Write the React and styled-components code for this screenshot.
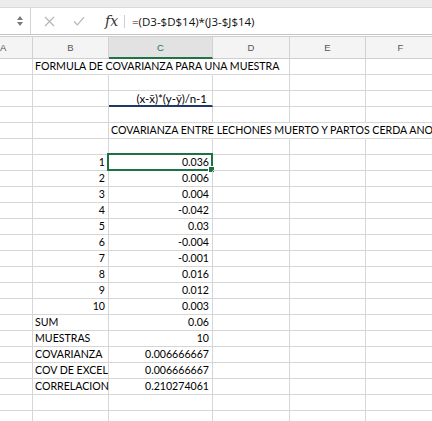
import React from "react";
import styled, { createGlobalStyle, css } from "styled-components";

const GlobalStyle = createGlobalStyle`
  html, body { margin: 0; padding: 0; background: #ffffff; overflow: hidden; }
  body { font-family: Lato, "Liberation Sans", Arial, sans-serif; }
`;

const FONT = `Lato, "Liberation Sans", Arial, sans-serif`;
const GRID = "#d6d6d6";
const COLS = [33, 76, 104, 77, 76, 70];

const Sheet = styled.div`
  width: 432px;
  height: 421px;
  overflow: hidden;
  display: flex;
  flex-direction: column;
  background: #fff;
`;

const TopStrip = styled.div`
  height: 7px;
  background: #ececec;
  flex: none;
`;

const FormulaBar = styled.div`
  height: 26px;
  display: flex;
  align-items: center;
  background: #fff;
  border-top: 1px solid #d9d9d9;
  border-bottom: 1px solid #c4c4c4;
  flex: none;
`;

const NameBox = styled.div`
  width: 31px;
  height: 100%;
  border-right: 1px solid #d4d4d4;
  display: flex;
  align-items: center;
  justify-content: flex-end;
  padding-right: 7px;
  box-sizing: border-box;
`;

const Spinner = styled.div`
  display: flex;
  flex-direction: column;
  gap: 2px;
`;

const Tri = styled.div`
  width: 0;
  height: 0;
  border-left: 3px solid transparent;
  border-right: 3px solid transparent;
  ${(p) =>
    p.$up
      ? css`border-bottom: 4px solid #7a7a7a;`
      : css`border-top: 4px solid #7a7a7a;`}
`;

const IconArea = styled.div`
  display: flex;
  align-items: center;
  width: 93px;
  padding-left: 13px;
  box-sizing: border-box;
`;

const IconSlot = styled.div`
  width: ${(p) => p.$w}px;
  display: flex;
  align-items: center;
  justify-content: flex-start;
`;

const Fx = styled.span`
  font-family: "DejaVu Serif", "Liberation Serif", serif;
  font-style: italic;
  font-size: 14px;
  color: #333;
  margin-left: 3px;
`;

const Divider = styled.div`
  width: 1px;
  height: 13px;
  background: #cfcfcf;
  margin-right: 7px;
`;

const FormulaText = styled.div`
  font-family: "Open Sans", "Liberation Sans", sans-serif;
  font-size: 11.5px;
  color: #111;
  white-space: nowrap;
`;

const Gap = styled.div`
  height: 1px;
  background: #fff;
  flex: none;
`;

const HeaderRow = styled.div`
  display: grid;
  grid-template-columns: ${COLS.map((c) => c + "px").join(" ")};
  height: 23px;
  border-top: 1px solid #cfcfcf;
  background: #f4f4f4;
  flex: none;
  box-sizing: border-box;
`;

const HeaderCell = styled.div`
  display: flex;
  align-items: center;
  justify-content: ${(p) => (p.$left ? "flex-start" : "center")};
  font-family: "Liberation Sans", Arial, sans-serif;
  font-size: 9.5px;
  color: ${(p) => (p.$sel ? "#217346" : "#555")};
  border-right: 1px solid #d2d2d2;
  border-bottom: ${(p) => (p.$sel ? "2px solid #217346" : "1px solid #cfcfcf")};
  background: ${(p) => (p.$sel ? "#e2e2e2" : "transparent")};
  box-sizing: border-box;
  padding-top: ${(p) => (p.$sel ? "1px" : "0")};
`;

const Body = styled.div`
  display: flex;
  flex-direction: column;
`;

const Row = styled.div`
  display: grid;
  grid-template-columns: ${COLS.map((c) => c + "px").join(" ")};
  height: 16px;
`;

const Cell = styled.div`
  position: relative;
  box-sizing: border-box;
  height: 16px;
  border-bottom: ${(p) => (p.$under ? "2px solid #1f3864" : `1px solid ${GRID}`)};
  border-right: ${(p) => (p.$noRight ? "1px solid transparent" : `1px solid ${GRID}`)};
  font-family: ${FONT};
  font-size: ${(p) => (p.$big ? "11.5px" : "10.6px")};
  line-height: 15px;
  color: #000;
  white-space: nowrap;
  overflow: visible;
  text-align: ${(p) => (p.$align === "right" ? "right" : "left")};
  padding: 0 ${(p) => (p.$big ? "5px" : "3px")} 0 2px;
  z-index: ${(p) => (p.$front ? 2 : 1)};
`;

const Selection = styled.div`
  position: absolute;
  left: -2px;
  top: -2px;
  right: -1px;
  bottom: -1px;
  border: 2px solid #1e7145;
  pointer-events: none;
`;

const FillHandle = styled.div`
  position: absolute;
  right: -4px;
  bottom: -4px;
  width: 5px;
  height: 5px;
  background: #1e7145;
  border: 1px solid #fff;
`;

function XIcon() {
  return (
    <svg width="11" height="11" viewBox="0 0 11 11">
      <path d="M1 1 L10 10 M10 1 L1 10" stroke="#b5b5b5" strokeWidth="1.2" fill="none" />
    </svg>
  );
}

function CheckIcon() {
  return (
    <svg width="12" height="10" viewBox="0 0 12 10">
      <path d="M1 5.5 L4.3 8.8 L11 1.2" stroke="#b5b5b5" strokeWidth="1.2" fill="none" />
    </svg>
  );
}

const headers = ["A", "B", "C", "D", "E", "F"];

const empty = () => Array.from({ length: 6 }, () => ({}));

function buildRows() {
  const rows = [];
  const r1 = empty();
  r1[1] = { text: "FORMULA DE COVARIANZA PARA UNA MUESTRA", noRight: true, front: true };
  r1[2] = { noRight: true };
  rows.push(r1);
  rows.push(empty());
  const r3 = empty();
  r3[2] = { text: "(x-x\u0304)*(y-\u0233)/n-1", align: "right", under: true, big: true };
  rows.push(r3);
  rows.push(empty());
  const r5 = empty();
  r5[2] = {
    text: "COVARIANZA ENTRE LECHONES MUERTO Y PARTOS CERDA ANO",
    noRight: true,
    front: true,
  };
  r5[3] = { noRight: true };
  r5[4] = { noRight: true };
  r5[5] = { noRight: true };
  rows.push(r5);
  rows.push(empty());
  const vals = ["0.036", "0.006", "0.004", "-0.042", "0.03", "-0.004", "-0.001", "0.016", "0.012", "0.003"];
  vals.forEach((v, i) => {
    const r = empty();
    r[1] = { text: String(i + 1), align: "right" };
    r[2] = { text: v, align: "right", selected: i === 0 };
    rows.push(r);
  });
  const summary = [
    ["SUM", "0.06"],
    ["MUESTRAS", "10"],
    ["COVARIANZA", "0.006666667"],
    ["COV DE EXCEL", "0.006666667"],
    ["CORRELACION", "0.210274061"],
  ];
  summary.forEach(([l, v]) => {
    const r = empty();
    r[1] = { text: l };
    r[2] = { text: v, align: "right" };
    rows.push(r);
  });
  rows.push(empty());
  rows.push(empty());
  rows.push(empty());
  return rows;
}

const rows = buildRows();

export default function App() {
  return (
    <>
      <GlobalStyle />
      <Sheet>
        <TopStrip />
        <FormulaBar>
          <NameBox>
            <Spinner>
              <Tri $up />
              <Tri />
            </Spinner>
          </NameBox>
          <IconArea>
            <IconSlot $w={29}>
              <XIcon />
            </IconSlot>
            <IconSlot $w={29}>
              <CheckIcon />
            </IconSlot>
            <IconSlot $w={22}>
              <Fx>fx</Fx>
            </IconSlot>
          </IconArea>
          <Divider />
          <FormulaText>=(D3-$D$14)*(J3-$J$14)</FormulaText>
        </FormulaBar>
        <Gap />
        <HeaderRow>
          {headers.map((h, i) => (
            <HeaderCell key={h} $sel={i === 2} $left={i === 0}>
              {h}
            </HeaderCell>
          ))}
        </HeaderRow>
        <Body>
          {rows.map((r, ri) => (
            <Row key={ri}>
              {r.map((c, ci) => (
                <Cell
                  key={ci}
                  $align={c.align}
                  $noRight={c.noRight}
                  $front={c.front}
                  $under={c.under}
                  $big={c.big}
                >
                  {c.text}
                  {c.selected && (
                    <Selection>
                      <FillHandle />
                    </Selection>
                  )}
                </Cell>
              ))}
            </Row>
          ))}
        </Body>
      </Sheet>
    </>
  );
}
